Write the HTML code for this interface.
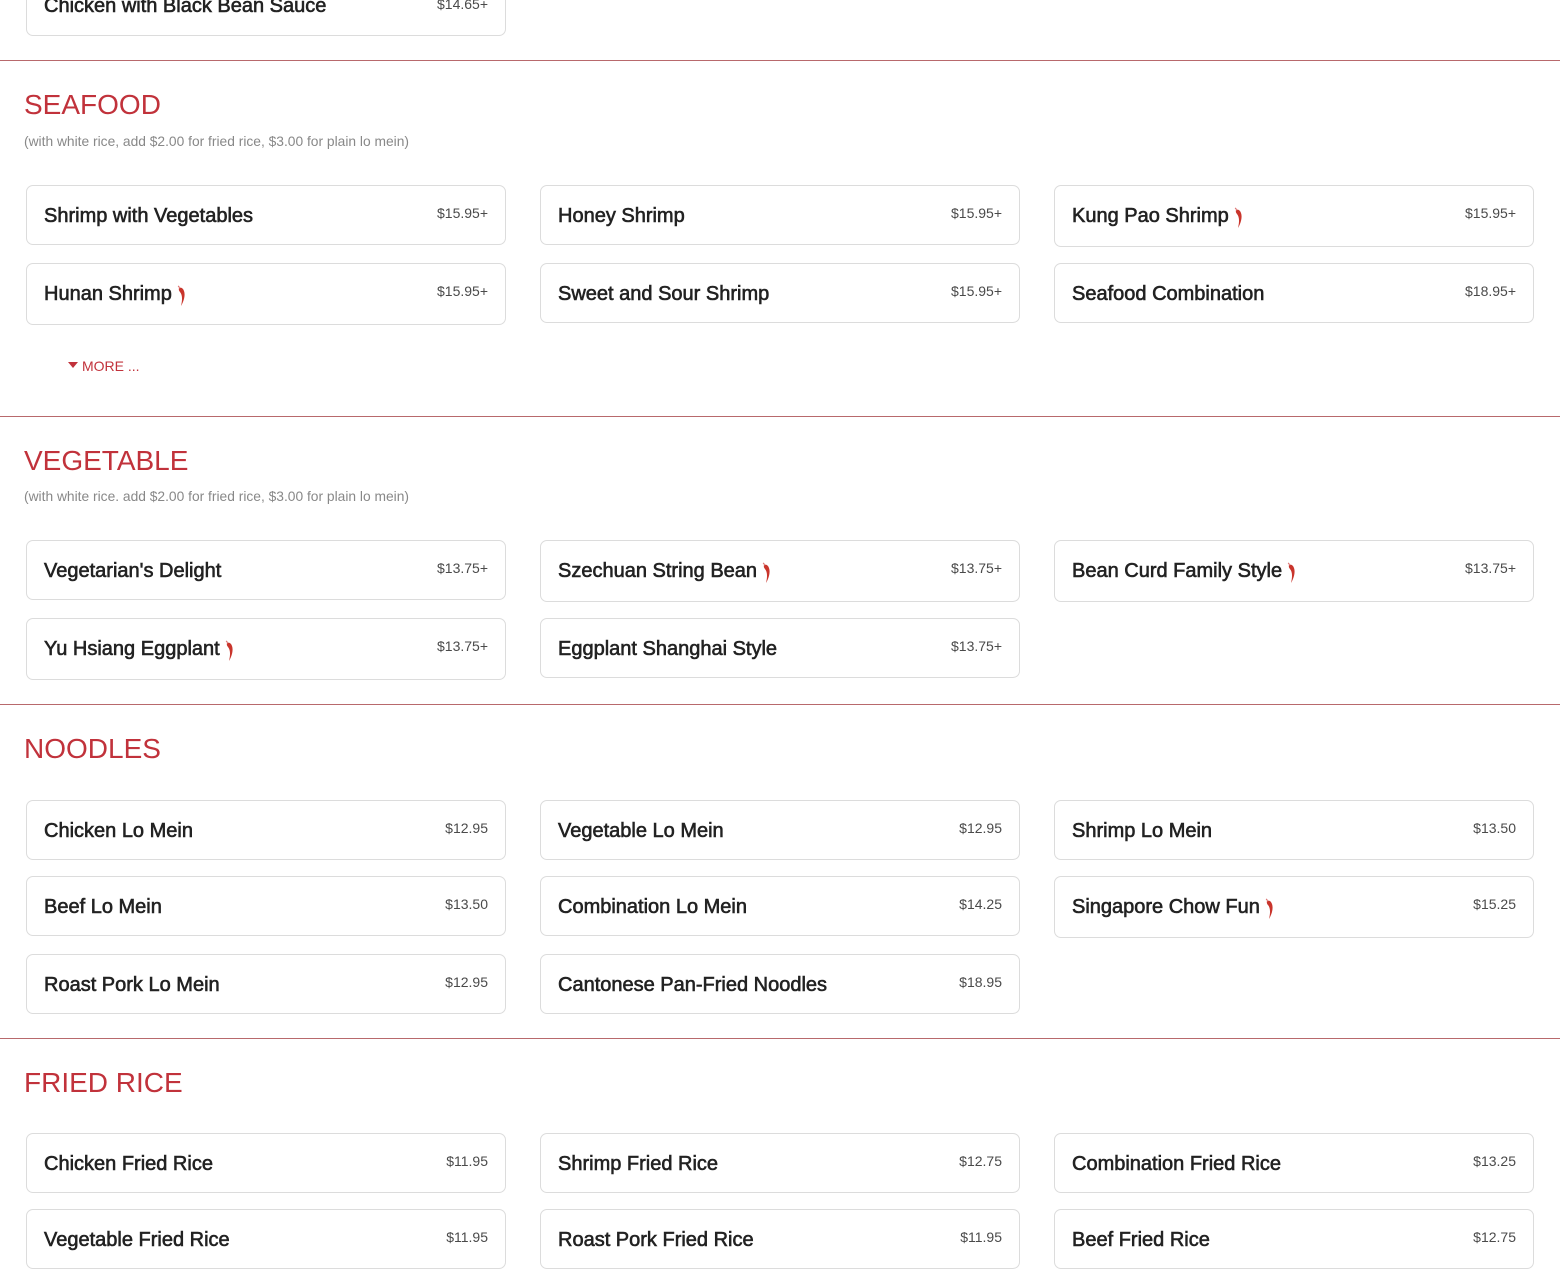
<!DOCTYPE html>
<html><head><meta charset="utf-8"><style>
*{margin:0;padding:0;box-sizing:border-box}
body{width:1560px;height:1248px;position:relative;overflow:hidden;background:#fff;font-family:"Liberation Sans",Arial,sans-serif}
.c{position:absolute;width:480px;border:1px solid #dcdcdc;border-radius:7px;background:#fff}
.n{position:absolute;left:17px;font-size:20px;color:#222;-webkit-text-stroke:0.6px #222;white-space:nowrap;line-height:24px}
.p{position:absolute;right:17px;font-size:14px;color:#4a4a4a;line-height:16px}
.ch{display:inline-block;width:9px;height:22px;margin-left:5px;vertical-align:-7px}
.hr{position:absolute;left:0;width:1560px;height:1px;background:#b8696c}
.h{position:absolute;left:24px;font-size:28px;color:#c1323b;line-height:34px}
.s{position:absolute;left:24px;font-size:13.8px;color:#888;line-height:16px}
</style></head><body>
<svg width="0" height="0" style="position:absolute"><defs><symbol id="chili" viewBox="0 0 9 22"><path d="M2 3 C4 2 6 3 7 6 C8.5 10 7 16 4 21 C5.5 15 5.5 10 3 7 C2 6 1.5 4.5 2 3 Z" fill="#c9352c"/><path d="M1 1 C2 1.5 2.5 2.5 2.5 3.5" stroke="#d77" stroke-width="1" fill="none"/></symbol></defs></svg>

<div class="c" style="left:26px;top:-25px;height:61px"><div class="n" style="top:18px">Chicken with Black Bean Sauce</div><div class="p" style="top:20px">$14.65+</div></div>
<div class="hr" style="top:60px"></div>

<div class="h" style="top:88px">SEAFOOD</div>
<div class="s" style="top:134px">(with white rice, add $2.00 for fried rice, $3.00 for plain lo mein)</div>

<div class="c" style="left:26px;top:185px;height:60px"><div class="n" style="top:18px">Shrimp with Vegetables</div><div class="p" style="top:19px">$15.95+</div></div>
<div class="c" style="left:540px;top:185px;height:60px"><div class="n" style="top:18px">Honey Shrimp</div><div class="p" style="top:19px">$15.95+</div></div>
<div class="c" style="left:1054px;top:185px;height:62px"><div class="n" style="top:18px">Kung Pao Shrimp<svg class="ch"><use href="#chili"/></svg></div><div class="p" style="top:19px">$15.95+</div></div>
<div class="c" style="left:26px;top:263px;height:62px"><div class="n" style="top:18px">Hunan Shrimp<svg class="ch"><use href="#chili"/></svg></div><div class="p" style="top:19px">$15.95+</div></div>
<div class="c" style="left:540px;top:263px;height:60px"><div class="n" style="top:18px">Sweet and Sour Shrimp</div><div class="p" style="top:19px">$15.95+</div></div>
<div class="c" style="left:1054px;top:263px;height:60px"><div class="n" style="top:18px">Seafood Combination</div><div class="p" style="top:19px">$18.95+</div></div>
<div style="position:absolute;left:68px;top:358px;font-size:14px;color:#c1323b;line-height:16px"><span style="display:inline-block;width:0;height:0;border-left:5px solid transparent;border-right:5px solid transparent;border-top:6px solid #c1323b;vertical-align:3px;margin-right:4px"></span>MORE ...</div>
<div class="hr" style="top:416px"></div>

<div class="h" style="top:444px">VEGETABLE</div>
<div class="s" style="top:489px">(with white rice. add $2.00 for fried rice, $3.00 for plain lo mein)</div>

<div class="c" style="left:26px;top:540px;height:60px"><div class="n" style="top:18px">Vegetarian's Delight</div><div class="p" style="top:19px">$13.75+</div></div>
<div class="c" style="left:540px;top:540px;height:62px"><div class="n" style="top:18px">Szechuan String Bean<svg class="ch"><use href="#chili"/></svg></div><div class="p" style="top:19px">$13.75+</div></div>
<div class="c" style="left:1054px;top:540px;height:62px"><div class="n" style="top:18px">Bean Curd Family Style<svg class="ch"><use href="#chili"/></svg></div><div class="p" style="top:19px">$13.75+</div></div>
<div class="c" style="left:26px;top:618px;height:62px"><div class="n" style="top:18px">Yu Hsiang Eggplant<svg class="ch"><use href="#chili"/></svg></div><div class="p" style="top:19px">$13.75+</div></div>
<div class="c" style="left:540px;top:618px;height:60px"><div class="n" style="top:18px">Eggplant Shanghai Style</div><div class="p" style="top:19px">$13.75+</div></div>
<div class="hr" style="top:704px"></div>

<div class="h" style="top:732px">NOODLES</div>
<div class="c" style="left:26px;top:800px;height:60px"><div class="n" style="top:18px">Chicken Lo Mein</div><div class="p" style="top:19px">$12.95</div></div>
<div class="c" style="left:540px;top:800px;height:60px"><div class="n" style="top:18px">Vegetable Lo Mein</div><div class="p" style="top:19px">$12.95</div></div>
<div class="c" style="left:1054px;top:800px;height:60px"><div class="n" style="top:18px">Shrimp Lo Mein</div><div class="p" style="top:19px">$13.50</div></div>
<div class="c" style="left:26px;top:876px;height:60px"><div class="n" style="top:18px">Beef Lo Mein</div><div class="p" style="top:19px">$13.50</div></div>
<div class="c" style="left:540px;top:876px;height:60px"><div class="n" style="top:18px">Combination Lo Mein</div><div class="p" style="top:19px">$14.25</div></div>
<div class="c" style="left:1054px;top:876px;height:62px"><div class="n" style="top:18px">Singapore Chow Fun<svg class="ch"><use href="#chili"/></svg></div><div class="p" style="top:19px">$15.25</div></div>
<div class="c" style="left:26px;top:954px;height:60px"><div class="n" style="top:18px">Roast Pork Lo Mein</div><div class="p" style="top:19px">$12.95</div></div>
<div class="c" style="left:540px;top:954px;height:60px"><div class="n" style="top:18px">Cantonese Pan-Fried Noodles</div><div class="p" style="top:19px">$18.95</div></div>
<div class="hr" style="top:1038px"></div>

<div class="h" style="top:1066px">FRIED RICE</div>
<div class="c" style="left:26px;top:1133px;height:60px"><div class="n" style="top:18px">Chicken Fried Rice</div><div class="p" style="top:19px">$11.95</div></div>
<div class="c" style="left:540px;top:1133px;height:60px"><div class="n" style="top:18px">Shrimp Fried Rice</div><div class="p" style="top:19px">$12.75</div></div>
<div class="c" style="left:1054px;top:1133px;height:60px"><div class="n" style="top:18px">Combination Fried Rice</div><div class="p" style="top:19px">$13.25</div></div>
<div class="c" style="left:26px;top:1209px;height:60px"><div class="n" style="top:18px">Vegetable Fried Rice</div><div class="p" style="top:19px">$11.95</div></div>
<div class="c" style="left:540px;top:1209px;height:60px"><div class="n" style="top:18px">Roast Pork Fried Rice</div><div class="p" style="top:19px">$11.95</div></div>
<div class="c" style="left:1054px;top:1209px;height:60px"><div class="n" style="top:18px">Beef Fried Rice</div><div class="p" style="top:19px">$12.75</div></div>
</body></html>
